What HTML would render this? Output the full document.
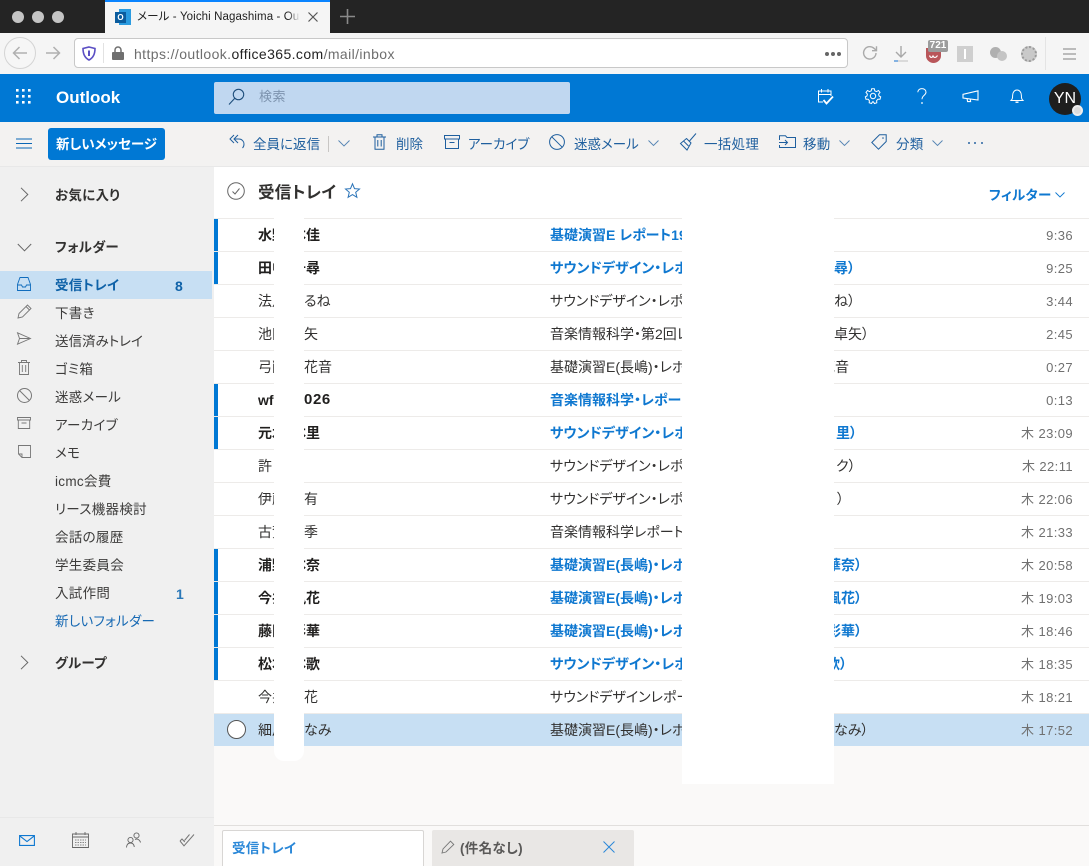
<!DOCTYPE html>
<html lang="ja"><head><meta charset="utf-8"><title>Outlook</title>
<style>
*{box-sizing:border-box}
html,body{margin:0;padding:0}
body{width:1089px;height:866px;position:relative;overflow:hidden;background:#faf9f8;font-family:"Liberation Sans","Noto Sans CJK JP",sans-serif;font-size:14px;color:#333;font-feature-settings:"palt"}
.a{position:absolute}
.t{position:absolute;white-space:nowrap;line-height:18px}
svg{position:absolute;overflow:visible;fill:none}
.row{position:absolute;left:214px;width:875px;height:33px;border-bottom:1px solid #edebe9;background:#fff}
.row .n{position:absolute;left:44px;top:6px;line-height:20px;white-space:nowrap;color:#323130}
.row .s{position:absolute;left:336px;top:6px;line-height:20px;white-space:nowrap;color:#323130}
.row .d{position:absolute;right:16px;top:7px;line-height:20px;white-space:nowrap;color:#707070;font-size:13px;letter-spacing:.4px}
.u{position:absolute;left:0;top:0;width:4px;height:32px;background:#0078d4}
.u~.n{font-weight:700;color:#201f1e}
.u~.s{font-weight:700;color:#0f78d0}
.nav{position:absolute;left:55px;white-space:nowrap;line-height:18px;color:#3d3c3b;font-size:13.5px;letter-spacing:.3px}
.tb{position:absolute;top:136px;white-space:nowrap;line-height:18px;color:#1f5f9e;font-size:13.5px}
.ch{opacity:.75}
</style></head><body>

<!-- Browser chrome -->
<div class="a" style="left:0;top:0;width:1089px;height:33px;background:#242424"></div>
<div class="a" style="left:12px;top:11px;width:12px;height:12px;border-radius:50%;background:#c4c4c4"></div>
<div class="a" style="left:32px;top:11px;width:12px;height:12px;border-radius:50%;background:#c4c4c4"></div>
<div class="a" style="left:52px;top:11px;width:12px;height:12px;border-radius:50%;background:#c4c4c4"></div>
<div class="a" style="left:105px;top:0;width:225px;height:33px;background:#f5f5f5;border-top:2px solid #0a84ff"></div>
<div class="a" style="left:119px;top:9px;width:12px;height:16px;background:#2a9be0"></div>
<div class="a" style="left:115px;top:12px;width:11px;height:11px;background:#0a5c9e;color:#fff;font-size:8px;line-height:11px;text-align:center;font-weight:700">O</div>
<div class="t" style="left:137px;top:8px;width:164px;overflow:hidden;font-size:11.5px;color:#222;letter-spacing:.1px">メール - Yoichi Nagashima - Outlook</div>
<div class="a" style="left:288px;top:10px;width:14px;height:14px;background:linear-gradient(90deg,rgba(245,245,245,0),#f5f5f5 85%)"></div>
<svg style="left:308px;top:12px" width="10" height="10" viewBox="0 0 10 10"><path d="M0.5 .5L9.5 9.5M9.5 .5L.5 9.5" stroke="#555" stroke-width="1.2"/></svg>
<svg style="left:340px;top:9px" width="15" height="15" viewBox="0 0 15 15"><path d="M7.5 0V15M0 7.5H15" stroke="#8a8a8a" stroke-width="1.6"/></svg>

<div class="a" style="left:0;top:33px;width:1089px;height:41px;background:#f5f5f5"></div>
<div class="a" style="left:4px;top:37px;width:32px;height:32px;border-radius:50%;border:1px solid #d4d4d4;background:#f6f6f6"></div>
<svg style="left:12px;top:46px" width="16" height="14" viewBox="0 0 16 14"><path d="M15 7H1.5M7.5 1L1.5 7L7.5 13" stroke="#b0b0b0" stroke-width="1.5"/></svg>
<svg style="left:45px;top:46px" width="16" height="14" viewBox="0 0 16 14"><path d="M1 7H14.5M8.5 1L14.5 7L8.5 13" stroke="#b0b0b0" stroke-width="1.5"/></svg>
<div class="a" style="left:74px;top:38px;width:774px;height:30px;background:#fff;border:1px solid #c8c8c8;border-radius:4px"></div>
<svg style="left:82px;top:46px" width="14" height="15" viewBox="0 0 14 15"><path d="M7 1L13 2.5C13 8 11 12 7 14C3 12 1 8 1 2.5Z" stroke="#5b4fc4" stroke-width="1.6" fill="#fff"/><path d="M7 4.5V10" stroke="#5b4fc4" stroke-width="2"/></svg>
<div class="a" style="left:103px;top:43px;width:1px;height:20px;background:#e2e2e2"></div>
<svg style="left:112px;top:46px" width="12" height="14" viewBox="0 0 12 14"><rect x="0" y="6" width="12" height="8" rx="1" fill="#6f6f6f"/><path d="M3 6.5V4a3 3 0 016 0V6.5" stroke="#6f6f6f" stroke-width="1.5"/></svg>
<div class="t" style="left:134px;top:45px;font-size:14px;color:#6e6e6e;letter-spacing:.4px;font-feature-settings:normal">https://outlook.<span style="color:#222">office365.com</span>/mail/inbox</div>
<div class="a" style="left:825px;top:52px;width:4px;height:4px;border-radius:50%;background:#666;box-shadow:6px 0 0 #666,12px 0 0 #666"></div>
<svg style="left:862px;top:45px" width="16" height="16" viewBox="0 0 16 16"><path d="M14 8A6.2 6.2 0 1 1 12 3.3L14.5 5.5M14.5 1.2V5.7H10" stroke="#aaa" stroke-width="1.4"/></svg>
<svg style="left:893px;top:46px" width="16" height="17" viewBox="0 0 16 17"><path d="M8 0V10M3 6L8 11L13 6" stroke="#a8a8a8" stroke-width="1.4"/><path d="M1 15H15" stroke="#cfcfcf" stroke-width="1.4"/><path d="M1 15H5" stroke="#5b9be0" stroke-width="1.4"/></svg>
<svg style="left:926px;top:47px" width="15" height="16" viewBox="0 0 15 16"><path d="M0 1H15V9C15 13 11 16 7.5 16C4 16 0 13 0 9Z" fill="#b9565a"/><path d="M3.5 8.5C4.5 11 6 11 7 9C8 11 10 11 11.5 8.5" stroke="#fff" stroke-width="1.2"/></svg>
<div class="a" style="left:928px;top:40px;width:20px;height:12px;background:#9c9c9c;border-radius:2px;color:#fff;font-size:10px;line-height:12px;text-align:center;font-weight:700">721</div>
<div class="a" style="left:957px;top:46px;width:16px;height:16px;background:#cfcfcf"></div>
<div class="a" style="left:964px;top:49px;width:2px;height:10px;background:#fff"></div>
<div class="a" style="left:990px;top:47px;width:11px;height:11px;border-radius:50%;background:#b0b0b0"></div>
<div class="a" style="left:997px;top:51px;width:10px;height:10px;border-radius:50%;background:#c4c4c4"></div>
<div class="a" style="left:1021px;top:46px;width:16px;height:16px;border-radius:50%;background:#c9c9c9;border:2px dotted #9a9a9a"></div>
<div class="a" style="left:1045px;top:37px;width:1px;height:33px;background:#e4e4e4"></div>
<svg style="left:1063px;top:48px" width="13" height="12" viewBox="0 0 13 12"><path d="M0 1H13M0 6H13M0 11H13" stroke="#a8a8a8" stroke-width="1.5"/></svg>

<!-- Outlook header -->
<div class="a" style="left:0;top:74px;width:1089px;height:48px;background:#0078d4"></div>
<svg style="left:16px;top:89px" width="16" height="16" viewBox="0 0 16 16"><g fill="#fff"><rect x="0" y="0" width="2.6" height="2.6"/><rect x="6" y="0" width="2.6" height="2.6"/><rect x="12" y="0" width="2.6" height="2.6"/><rect x="0" y="6" width="2.6" height="2.6"/><rect x="6" y="6" width="2.6" height="2.6"/><rect x="12" y="6" width="2.6" height="2.6"/><rect x="0" y="12" width="2.6" height="2.6"/><rect x="6" y="12" width="2.6" height="2.6"/><rect x="12" y="12" width="2.6" height="2.6"/></g></svg>
<div class="t" style="left:56px;top:88px;font-size:17px;font-weight:700;color:#fff;line-height:20px">Outlook</div>
<div class="a" style="left:214px;top:82px;width:356px;height:32px;background:#c0d7f0;border-radius:2px"></div>
<svg style="left:228px;top:88px" width="17" height="18" viewBox="0 0 17 18"><circle cx="10.5" cy="6.5" r="5.2" stroke="#1f4f7c" stroke-width="1.1"/><path d="M6.8 10.2L1 16.5" stroke="#1f4f7c" stroke-width="1.1"/></svg>
<div class="t" style="left:259px;top:88px;font-size:13px;color:#7d93ae;letter-spacing:.5px">検索</div>
<svg style="left:817px;top:88px" width="17" height="18" viewBox="0 0 17 18"><path d="M6 14H1.5V3H14V8M1.5 6.5H14M4.5 1V4.5M11 1V4.5" stroke="#fff" stroke-width="1"/><path d="M6.5 12L9.5 15.5L16 8.5" stroke="#fff" stroke-width="1.8"/></svg>
<svg style="left:865px;top:88px" width="16" height="16" viewBox="0 0 16 16"><circle cx="8" cy="8" r="2.7" stroke="#fff"/><path d="M6.7.7H9.3L9.8 2.9L11.6 3.6L13.5 2.5L15 4.5L13.6 6.1L14 7.9L15.7 8.9L15 11.3L12.9 11.3L11.6 12.7L11.8 14.8L9.5 15.5L8.3 13.8H7.6L6.5 15.5L4.2 14.8L4.4 12.7L3.1 11.3L1 11.3L.3 8.9L2 7.9L2.4 6.1L1 4.5L2.5 2.5L4.4 3.6L6.2 2.9Z" stroke="#fff" stroke-width="1"/></svg>
<svg style="left:917px;top:88px" width="10" height="17" viewBox="0 0 10 17"><path d="M.8 4.3C.8 2 2.6.6 4.9.6C7.3.6 9 2.1 9 4.2C9 7.2 5 7.3 5 11.2" stroke="#fff" stroke-width="1"/><circle cx="5" cy="15" r=".9" fill="#fff"/></svg>
<svg style="left:962px;top:90px" width="17" height="13" viewBox="0 0 17 13"><path d="M16 .8V10L1 8V4.3ZM5 8.6L5.6 11.6H8.6L8.2 9" stroke="#fff" stroke-width="1.1"/></svg>
<svg style="left:1010px;top:89px" width="14" height="15" viewBox="0 0 14 15"><path d="M1 11.5C2.5 10 2.6 9 2.6 6.5C2.6 3.2 4.5 1 7 1C9.5 1 11.4 3.2 11.4 6.5C11.4 9 11.500 10 13 11.500Z" stroke="#fff"/><path d="M5.500 13.200H8.500" stroke="#fff" stroke-width="1.400"/></svg>
<div class="a" style="left:1049px;top:83px;width:32px;height:32px;border-radius:50%;background:#1e1e1e;color:#fff;font-size:16px;line-height:32px;text-align:center;font-feature-settings:normal">YN</div>
<div class="a" style="left:1072px;top:105px;width:11px;height:11px;border-radius:50%;background:#dcdcdc;border:2px solid #eee"></div>

<!-- Command bar -->
<div class="a" style="left:0;top:122px;width:1089px;height:45px;background:#f3f2f1"></div>
<div class="a" style="left:0;top:166px;width:1089px;height:1px;background:#e8e8e8"></div>
<svg style="left:16px;top:138px" width="16" height="11" viewBox="0 0 16 11"><path d="M0 1H16M0 5.500H16M0 10H16" stroke="#0a66b5" stroke-width="1"/></svg>
<div class="a" style="left:48px;top:128px;width:117px;height:32px;background:#0078d4;border-radius:3px;color:#fff;font-weight:700;font-size:13.500px;line-height:33px;text-align:center;white-space:nowrap">新しいメッセージ</div>
<svg style="left:229px;top:134px" width="16" height="15" viewBox="0 0 16 15"><path d="M5 1L1 5L5 9M9 1L5 5L9 9M5 5H10C13 5 15 7.500 15 10C15 11.500 14.500 13 13.500 14" stroke="#1f5f9e" stroke-width="1"/></svg>
<div class="tb" style="left:253px">全員に返信</div>
<div class="a" style="left:328px;top:136px;width:1px;height:16px;background:#c8c6c4"></div>
<svg class="ch" style="left:338px;top:140px" width="12" height="7" viewBox="0 0 12 7"><path d="M.5.500L6 6L11.500.500" stroke="#1f5f9e" stroke-width=".9"/></svg>
<svg style="left:373px;top:134px" width="13" height="16" viewBox="0 0 13 16"><path d="M0 3H13M4 3V.7H9V3M2 3V15.300H11V3M4.800 6V12.500M8.200 6V12.500" stroke="#1f5f9e" stroke-width="1"/></svg>
<div class="tb" style="left:396px">削除</div>
<svg style="left:444px;top:135px" width="16" height="14" viewBox="0 0 16 14"><path d="M.5.500H15.500V4H.5ZM1.500 4V13.500H14.500V4M5.500 7.500H10.500" stroke="#1f5f9e" stroke-width="1"/></svg>
<div class="tb" style="left:468px">アーカイブ</div>
<svg style="left:549px;top:134px" width="16" height="16" viewBox="0 0 16 16"><circle cx="8" cy="8" r="7.400" stroke="#1f5f9e"/><path d="M2.800 2.800L13.200 13.200" stroke="#1f5f9e"/></svg>
<div class="tb" style="left:574px">迷惑メール</div>
<svg class="ch" style="left:648px;top:140px" width="11" height="6" viewBox="0 0 11 6"><path d="M.5.500L5.500 5.500L10.500.500" stroke="#1f5f9e" stroke-width=".9"/></svg>
<svg style="left:680px;top:133px" width="17" height="18" viewBox="0 0 17 18"><path d="M16 .5L9.500 8M6.500 5.500L11 10L7 17L.5 10.500ZM3.500 8L8.500 13" stroke="#1f5f9e" stroke-width="1"/></svg>
<div class="tb" style="left:704px;letter-spacing:.3px">一括処理</div>
<svg style="left:779px;top:135px" width="17" height="14" viewBox="0 0 17 14"><path d="M.5 5V.8H6.500L8 2.500H16.500V12.500H.5V10M0 7.500H8.500M6 5L8.500 7.500L6 10" stroke="#1f5f9e" stroke-width="1"/></svg>
<div class="tb" style="left:803px;letter-spacing:.3px">移動</div>
<svg class="ch" style="left:839px;top:140px" width="11" height="6" viewBox="0 0 11 6"><path d="M.5.500L5.500 5.500L10.500.500" stroke="#1f5f9e" stroke-width=".9"/></svg>
<svg style="left:871px;top:134px" width="16" height="16" viewBox="0 0 16 16"><path d="M8.500.8H15.200V7.500L7.500 15.200L.8 8.500Z" stroke="#1f5f9e"/><circle cx="12" cy="4" r=".8" fill="#1f5f9e"/></svg>
<div class="tb" style="left:896px;letter-spacing:.3px">分類</div>
<svg class="ch" style="left:932px;top:140px" width="11" height="6" viewBox="0 0 11 6"><path d="M.5.500L5.500 5.500L10.500.500" stroke="#1f5f9e" stroke-width=".9"/></svg>
<div class="a" style="left:968px;top:142px;width:2px;height:2px;background:#5b87b5;box-shadow:6px 0 0 #5b87b5,13px 0 0 #5b87b5"></div>

<!-- Sidebar -->
<div class="a" style="left:0;top:167px;width:214px;height:699px;background:#f0f0f0"></div>
<svg style="left:20px;top:187px" width="9" height="15" viewBox="0 0 9 15"><path d="M1 .8L7.800 7.500L1 14.200" stroke="#666" stroke-width="1"/></svg>
<div class="t" style="left:55px;top:187px;font-weight:700;color:#323130;font-size:13.500px;letter-spacing:.3px">お気に入り</div>
<svg style="left:17px;top:243px" width="15" height="9" viewBox="0 0 15 9"><path d="M.8 1L7.500 7.800L14.200 1" stroke="#666" stroke-width="1"/></svg>
<div class="t" style="left:55px;top:239px;font-weight:700;color:#323130;font-size:13.500px;letter-spacing:.3px">フォルダー</div>
<div class="a" style="left:0;top:271px;width:212px;height:28px;background:#c7dff3"></div>
<svg style="left:17px;top:277px" width="14" height="14" viewBox="0 0 14 14"><path d="M3 .5H11L13.500 7.500V13.500H.5V7.500ZM.5 8H4.500L5.500 10H8.500L9.500 8H13.500" stroke="#0f6cbd" stroke-width=".9"/></svg>
<div class="t" style="left:55px;top:277px;font-weight:700;color:#0f62a8;font-size:13.500px;letter-spacing:.3px">受信トレイ</div>
<div class="t" style="left:175px;top:277px;font-weight:700;color:#0f62a8">8</div>
<svg style="left:17px;top:304px" width="15" height="15" viewBox="0 0 15 15"><path d="M1 14L2 9.500L10.500 1L14 4.500L5.500 13ZM9 2.500L12.500 6" stroke="#777" stroke-width=".9"/></svg>
<div class="nav" style="top:305px">下書き</div>
<svg style="left:17px;top:332px" width="14" height="13" viewBox="0 0 14 13"><path d="M.5.800L13.500 6.500L.5 12.200L2.500 6.500ZM2.500 6.500H13.500" stroke="#777" stroke-width=".9"/></svg>
<div class="nav" style="top:333px;letter-spacing:0">送信済みトレイ</div>
<svg style="left:18px;top:360px" width="12" height="15" viewBox="0 0 12 15"><path d="M0 2.500H12M3.500 2.500V.5H8.500V2.500M1.500 2.500V14.500H10.500V2.500M4.300 5V12M7.700 5V12" stroke="#777" stroke-width=".9"/></svg>
<div class="nav" style="top:361px">ゴミ箱</div>
<svg style="left:17px;top:388px" width="15" height="15" viewBox="0 0 15 15"><circle cx="7.500" cy="7.500" r="7" stroke="#777"/><path d="M2.500 2.500L12.500 12.500" stroke="#777"/></svg>
<div class="nav" style="top:389px">迷惑メール</div>
<svg style="left:17px;top:417px" width="14" height="12" viewBox="0 0 14 12"><path d="M.5.500H13.500V3H.5ZM1.300 3V11.500H12.700V3M4.500 6H9.500" stroke="#777" stroke-width=".9"/></svg>
<div class="nav" style="top:417px">アーカイブ</div>
<svg style="left:18px;top:445px" width="13" height="13" viewBox="0 0 13 13"><path d="M.5.500H12.500V12.500H4L.5 9ZM.5 9H4V12.500" stroke="#777" stroke-width=".9"/></svg>
<div class="nav" style="top:445px">メモ</div>
<div class="nav" style="top:473px">icmc会費</div>
<div class="nav" style="top:501px">リース機器検討</div>
<div class="nav" style="top:529px">会話の履歴</div>
<div class="nav" style="top:557px">学生委員会</div>
<div class="nav" style="top:585px">入試作問</div>
<div class="t" style="left:176px;top:585px;font-weight:700;color:#2a78b8">1</div>
<div class="nav" style="top:613px;color:#1769b3">新しいフォルダー</div>
<svg style="left:20px;top:655px" width="9" height="15" viewBox="0 0 9 15"><path d="M1 .8L7.800 7.500L1 14.200" stroke="#666" stroke-width="1"/></svg>
<div class="t" style="left:55px;top:655px;font-weight:700;color:#323130;font-size:13.500px;letter-spacing:.3px">グループ</div>
<div class="a" style="left:0;top:817px;width:214px;height:1px;background:#e8e8e8"></div>
<svg style="left:19px;top:835px" width="16" height="11" viewBox="0 0 16 11"><path d="M.6.600H15.400V10.400H.6ZM.6.800L8 6.500L15.400.8" stroke="#0f78d0" stroke-width="1.100"/></svg>
<svg style="left:72px;top:832px" width="17" height="16" viewBox="0 0 17 16"><path d="M.5 2H16.500V15.500H.5ZM.5 5H16.500M4 0V3M13 0V3" stroke="#666" stroke-width=".9"/><path d="M3 8H14M3 10.500H14M3 13H14" stroke="#888" stroke-dasharray="1.500 1"/></svg>
<svg style="left:126px;top:832px" width="15" height="16" viewBox="0 0 15 16"><circle cx="4.500" cy="8" r="2.600" stroke="#666" stroke-width=".9"/><path d="M.5 15.500C.7 12.500 2.300 11 4.500 11C6.700 11 8 12.500 8.300 15" stroke="#666" stroke-width=".9"/><circle cx="10.500" cy="3.500" r="2.600" stroke="#666" stroke-width=".9"/><path d="M9 7.500C11.500 6.300 14 8 14.500 10.500" stroke="#666" stroke-width=".9"/></svg>
<svg style="left:179px;top:833px" width="16" height="14" viewBox="0 0 16 14"><path d="M1 8L5 12.800L15 1.500M5.500 7.500L10.500 1.500M1 8L3 6L5.800 9" stroke="#777" stroke-width="1"/></svg>

<!-- Mail list header -->
<div class="a" style="left:214px;top:167px;width:875px;height:52px;background:#fff;border-bottom:1px solid #edebe9"></div>
<svg style="left:227px;top:182px" width="18" height="18" viewBox="0 0 18 18"><circle cx="9" cy="9" r="8.300" stroke="#666" stroke-width="1"/><path d="M5.500 9.500L8 12L12.500 6.500" stroke="#666" stroke-width="1"/></svg>
<div class="t" style="left:258px;top:183px;font-size:16.500px;font-weight:700;color:#323130;line-height:20px;letter-spacing:.3px">受信トレイ</div>
<svg style="left:345px;top:183px" width="15" height="15" viewBox="0 0 15 15"><path d="M7.500.8L9.500 5.600L14.500 6L10.700 9.300L11.900 14.300L7.500 11.600L3.100 14.300L4.300 9.300L.5 6L5.500 5.600Z" stroke="#2b74b8" stroke-width="1"/></svg>
<div class="t" style="left:989px;top:187px;font-weight:700;color:#0f78d0;font-size:13.500px;letter-spacing:.3px">フィルター</div>
<svg style="left:1055px;top:192px" width="10" height="6" viewBox="0 0 10 6"><path d="M.5.500L5 5L9.500.5" stroke="#0f78d0" stroke-width=".9"/></svg>

<!-- Rows -->
<div class="row" style="top:219px"><div class="u"></div><div class="n">水野</div><div class="n" style="left:78px">本佳</div><div class="s">基礎演習E レポート19</div><div class="d">9:36</div></div>
<div class="row" style="top:252px"><div class="u"></div><div class="n">田中</div><div class="n" style="left:78px">千尋</div><div class="s">サウンドデザイン・レポート</div><div class="s" style="left:620px">尋）</div><div class="d">9:25</div></div>
<div class="row" style="top:285px"><div class="n">法月</div><div class="n" style="left:90px">るね</div><div class="s">サウンドデザイン・レポート</div><div class="s" style="left:620px">ね）</div><div class="d">3:44</div></div>
<div class="row" style="top:318px"><div class="n">池田</div><div class="n" style="left:90px">矢</div><div class="s">音楽情報科学・第2回レ</div><div class="s" style="left:620px">卓矢）</div><div class="d">2:45</div></div>
<div class="row" style="top:351px"><div class="n">弓削</div><div class="n" style="left:90px">花音</div><div class="s">基礎演習E(長嶋)・レポート</div><div class="s" style="left:607px">花音</div><div class="d">0:27</div></div>
<div class="row" style="top:384px"><div class="u"></div><div class="n">wf0000</div><div class="n" style="left:90px;font-size:15px;letter-spacing:.6px">026</div><div class="s">音楽情報科学・レポート</div><div class="d">0:13</div></div>
<div class="row" style="top:417px"><div class="u"></div><div class="n">元木</div><div class="n" style="left:78px">本里</div><div class="s">サウンドデザイン・レポート</div><div class="s" style="left:622px">里）</div><div class="d">木 23:09</div></div>
<div class="row" style="top:450px"><div class="n">許</div><div class="s">サウンドデザイン・レポート</div><div class="s" style="left:622px">ク）</div><div class="d">木 22:11</div></div>
<div class="row" style="top:483px"><div class="n">伊藤</div><div class="n" style="left:90px">有</div><div class="s">サウンドデザイン・レポート</div><div class="s" style="left:623px">）</div><div class="d">木 22:06</div></div>
<div class="row" style="top:516px"><div class="n">古賀</div><div class="n" style="left:90px">季</div><div class="s">音楽情報科学レポート</div><div class="d">木 21:33</div></div>
<div class="row" style="top:549px"><div class="u"></div><div class="n">浦野</div><div class="n" style="left:78px">本奈</div><div class="s">基礎演習E(長嶋)・レポート</div><div class="s" style="left:613px">華奈）</div><div class="d">木 20:58</div></div>
<div class="row" style="top:582px"><div class="u"></div><div class="n">今井</div><div class="n" style="left:78px">風花</div><div class="s">基礎演習E(長嶋)・レポート</div><div class="s" style="left:613px">風花）</div><div class="d">木 19:03</div></div>
<div class="row" style="top:615px"><div class="u"></div><div class="n">藤田</div><div class="n" style="left:78px">彩華</div><div class="s">基礎演習E(長嶋)・レポート</div><div class="s" style="left:613px">彩華）</div><div class="d">木 18:46</div></div>
<div class="row" style="top:648px"><div class="u"></div><div class="n">松本</div><div class="n" style="left:78px">本歌</div><div class="s">サウンドデザイン・レポート</div><div class="s" style="left:612px">歌）</div><div class="d">木 18:35</div></div>
<div class="row" style="top:681px"><div class="n">今井</div><div class="n" style="left:90px">花</div><div class="s">サウンドデザインレポート</div><div class="d">木 18:21</div></div>
<div class="row" style="top:714px;height:32px;background:#c7dff3;border-bottom:0"><div class="a" style="left:13px;top:6px;width:19px;height:19px;border-radius:50%;background:#fff;border:1px solid #555"></div><div class="n">細川</div><div class="n" style="left:90px">なみ</div><div class="s">基礎演習E(長嶋)・レポート</div><div class="s" style="left:620px">なみ）</div><div class="d">木 17:52</div></div>

<!-- Redaction masks -->
<div class="a" style="left:274px;top:214px;width:30px;height:547px;background:#fff;border-radius:0 0 10px 10px"></div>
<div class="a" style="left:682px;top:214px;width:152px;height:570px;background:#fff"></div>

<!-- Bottom tabs -->
<div class="a" style="left:214px;top:825px;width:875px;height:41px;background:#faf9f8;border-top:1px solid #e1dfdd"></div>
<div class="a" style="left:222px;top:830px;width:202px;height:36px;background:#fff;border:1px solid #d8d6d4;border-bottom:0;border-radius:2px 2px 0 0"></div>
<div class="t" style="left:232px;top:840px;font-weight:700;color:#2b88d8;font-size:13.500px;letter-spacing:.3px">受信トレイ</div>
<div class="a" style="left:432px;top:830px;width:202px;height:36px;background:#e9e7e5;border-radius:2px 2px 0 0"></div>
<svg style="left:441px;top:840px" width="14" height="14" viewBox="0 0 14 14"><path d="M1 13L2 9L9.500 1.200L12.800 4.500L5 12Z" stroke="#777" stroke-width=".9"/></svg>
<div class="t" style="left:460px;top:840px;font-weight:700;color:#5a5958;font-size:13.500px;letter-spacing:.3px">(件名なし)</div>
<svg style="left:603px;top:841px" width="12" height="12" viewBox="0 0 12 12"><path d="M.5.500L11.500 11.500M11.500.5L.5 11.500" stroke="#2b88d8" stroke-width="1"/></svg>

</body></html>
